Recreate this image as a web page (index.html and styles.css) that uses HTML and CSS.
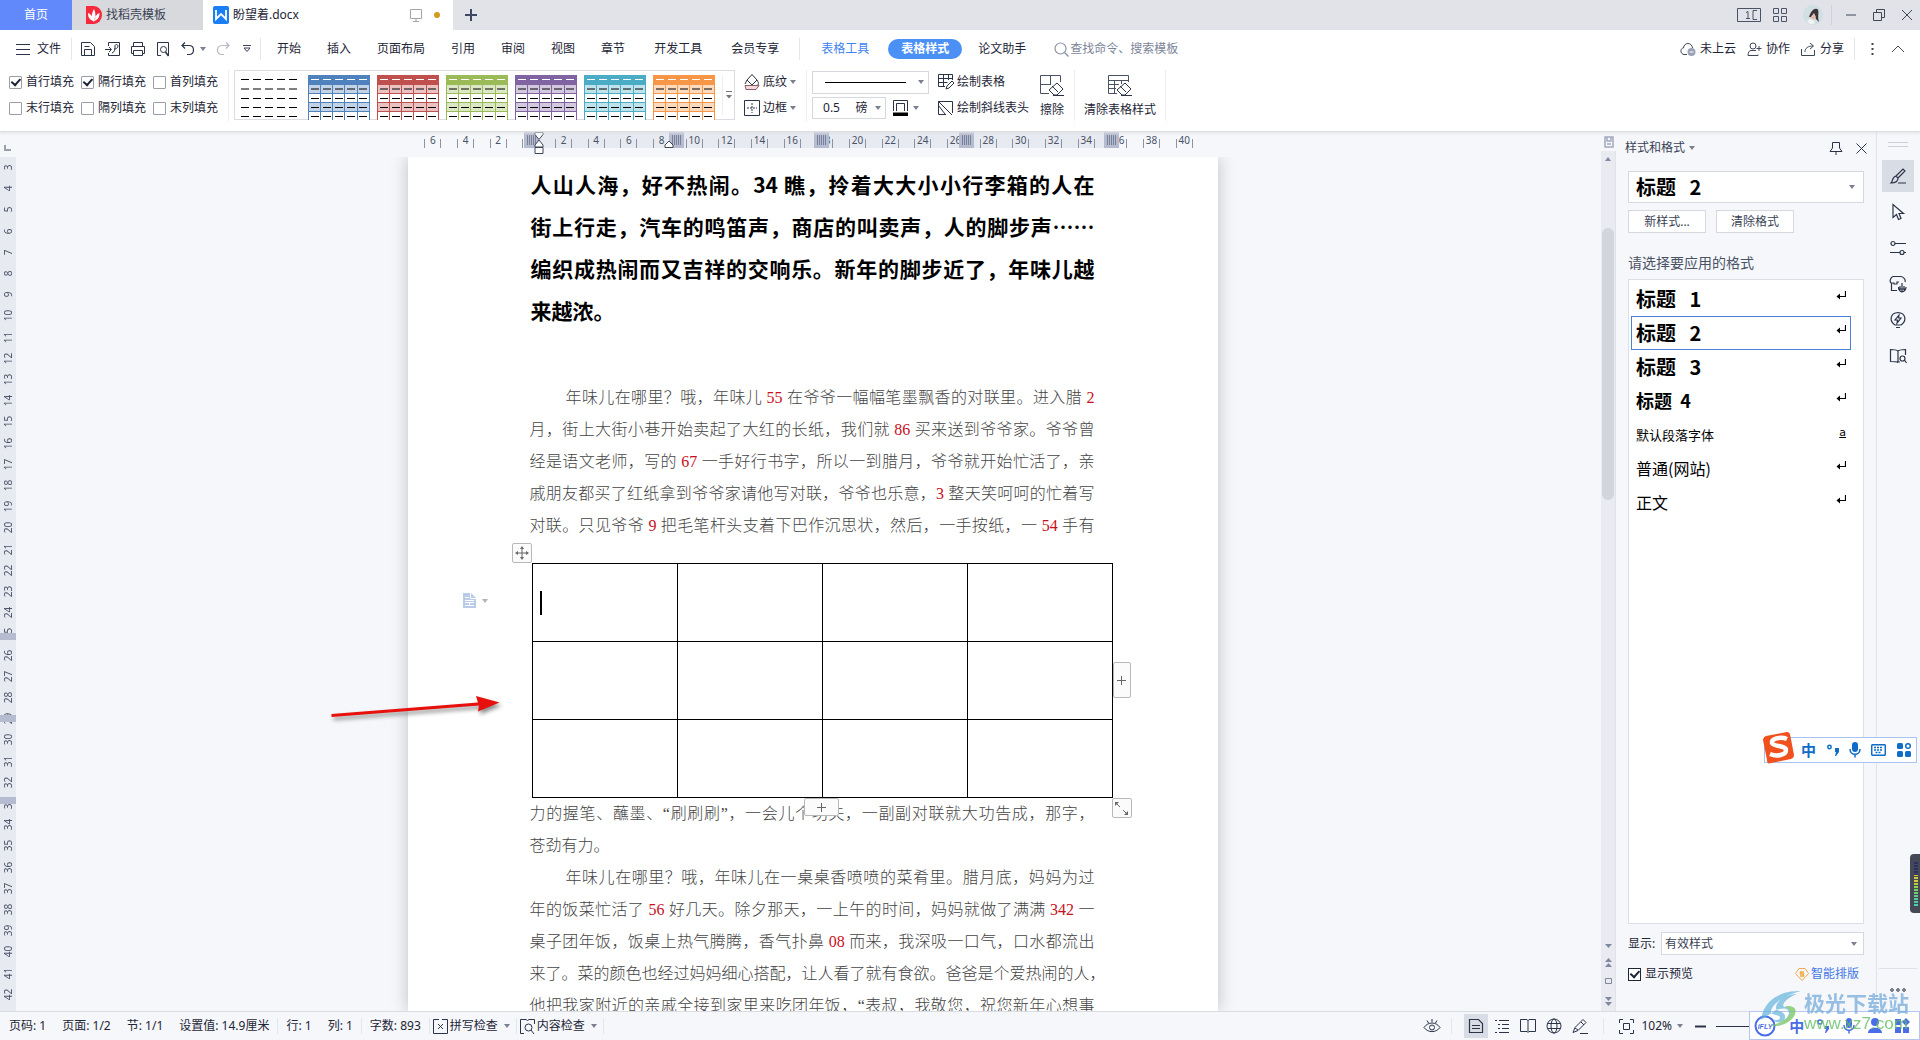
FILE: index.html
```html
<!DOCTYPE html>
<html lang="zh-CN">
<head>
<meta charset="utf-8">
<meta name="viewport" content="width=device-width, initial-scale=1">
<title>盼望着.docx</title>
<link rel="stylesheet" href="styles.css">
</head>
<body>
<svg class="defs" aria-hidden="true">
  <symbol id="preset" viewBox="0 0 62 45">
    <rect width="62" height="45" fill="#fff"/>
    <rect width="62" height="9" fill="currentColor"/>
    <path d="M0 9h62v9H0zM0 27h62v9H0z" fill="currentColor" opacity=".35"/>
    <path d="M.5 9v36M12.500 9v36M24.500 9v36M36.500 9v36M49.500 9v36M61.500 9v36M0 9.500h62M0 18.500h62M0 27.500h62M0 36.500h62" stroke="currentColor" fill="none"/>
    <path d="M3 4.500h56" stroke="#fff" stroke-width="1" stroke-dasharray="8 4"/>
    <path d="M3 14h56M3 23.500h56M3 32.500h56M3 41.500h56" stroke="#000" stroke-width="1.200" stroke-dasharray="8 4"/>
  </symbol>
  <symbol id="ret" viewBox="0 0 10 10"><path d="M9.500 1v5.500H2" fill="none" stroke="currentColor" stroke-width="1.200"/><path d="M4 3.500v6L.5 6.500z" fill="currentColor"/></symbol>
</svg>

<header>
  <div class="tabs">
    <button class="tab home">首页</button>
    <button class="tab tpl"><svg width="16" height="18" viewBox="0 0 16 18"><path d="M0 0h8a8 9 0 0 1 0 18H0z" fill="#f5283c"/><path d="M8 16C5 13 5 8 8 3c2 4 2 9 0 13M7 15C3 13 2 11 2 7c3 1 5 4 5 8M8.500 15c4-2 5-4 5-8-3 1-5 4-5 8" fill="#fff"/></svg>找稻壳模板</button>
    <button class="tab doc"><svg width="16" height="18" viewBox="0 0 16 18"><rect width="16" height="18" rx="2" fill="#1a7ef5"/><path d="M3 4v9l5-5 5 5V4" fill="none" stroke="#fff" stroke-width="1.800"/></svg>盼望着.docx<span class="grow"></span><svg width="12" height="13" viewBox="0 0 12 13" fill="none" stroke="#a0a4ad"><path d="M.5.5h11v9H.5zM6 9.500v3M3 12.500h6"/></svg><i class="dot"></i></button>
    <button class="tab plus" aria-label="新建"><svg width="12" height="12" viewBox="0 0 12 12"><path d="M6 0v12M0 6h12" stroke="#3e4860" stroke-width="2"/></svg></button>
    <span class="grow"></span>
    <div class="window">
      <button aria-label="切换"><svg width="24" height="14" viewBox="0 0 24 14" fill="none" stroke="#4a5266"><path d="M.5.5h23v13H.5zM9 4.500l2-1v7M9 10.500h4M20 2.500h-4v9h4"/></svg></button>
      <button aria-label="应用"><svg width="14" height="14" viewBox="0 0 14 14" fill="none" stroke="#4a5266"><path d="M.5.5h5v5h-5zM8.500.5h5v5h-5zM.5 8.500h5v5h-5zM8.500 8.500h5v5h-5z"/></svg></button>
      <button class="user" aria-label="用户"><svg width="20" height="20" viewBox="0 0 20 20"><circle cx="10" cy="10" r="10" fill="#cfdfe2"/><path d="M6 12c2-5 4-9 8-8 3 1 0 7 2 13l-3-3-2-5-3 3z" fill="#3a3338"/><path d="M11 8l2 4-3 3-3-2z" fill="#e5b9b0"/><path d="M4 16c3-3 6-3 8 2-4 2-6 1-8-2" fill="#f2f4f5"/></svg></button>
      <i class="vr"></i>
      <button aria-label="最小化"><svg width="12" height="12" viewBox="0 0 12 12"><path d="M1 6h10" stroke="#3e4658"/></svg></button>
      <button aria-label="还原"><svg width="12" height="12" viewBox="0 0 12 12" fill="none" stroke="#3e4658"><path d="M.5 3.500h8v8h-8zM3.500 3.500v-3h8v8h-3"/></svg></button>
      <button aria-label="关闭"><svg width="12" height="12" viewBox="0 0 12 12"><path d="M1 1l10 10M11 1L1 11" stroke="#3e4658"/></svg></button>
    </div>
  </div>

  <div class="menu">
    <button class="file"><svg width="14" height="12" viewBox="0 0 14 12"><path d="M0 1.500h14M0 6.500h14M0 11.500h14" stroke="#2b3348"/></svg>文件</button>
    <i class="vr"></i>
    <div class="quick">
      <button aria-label="保存"><svg width="16" height="16" viewBox="0 0 16 16" fill="none" stroke="#2b3348"><path d="M1.500 14.500v-13h9l4 4v9zM4.500 14.500v-6h7v6M4.500 5.500h5"/></svg></button>
      <button aria-label="输出"><svg width="16" height="16" viewBox="0 0 16 16" fill="none" stroke="#2b3348"><path d="M3.500 5V1.500h11v13h-11V12M0 8.500h6M4 6l2.500 2.500L4 11M7 12c3-1 3-4 3-7 0-2 3-2 3 0s-2 3-4 3"/></svg></button>
      <button aria-label="打印"><svg width="16" height="16" viewBox="0 0 16 16" fill="none" stroke="#2b3348"><path d="M3.500 5V1.500h9V5M3.500 12.500h-2v-7h13v7h-2M3.500 9.500h9v5h-9z"/></svg></button>
      <button aria-label="预览"><svg width="16" height="16" viewBox="0 0 16 16" fill="none" stroke="#2b3348"><path d="M6 14.500H2.500v-13h11v13"/><circle cx="8.500" cy="8.500" r="3"/><path d="M10.500 11l3 4" stroke-width="1.500"/></svg></button>
      <button class="undo" aria-label="撤销"><svg width="16" height="16" viewBox="0 0 16 16" fill="none" stroke="#2b3348" stroke-width="1.200"><path d="M5 1.500L2 4.500l3 3M2 4.500h7c6 0 6 9 0 9H7"/></svg><i class="tri"></i></button>
      <button aria-label="恢复"><svg width="16" height="16" viewBox="0 0 16 16" fill="none" stroke="#b4b8c2" stroke-width="1.200"><path d="M11 1.500l3 3-3 3M14 4.500H7c-6 0-6 9 0 9h2"/></svg></button>
      <button class="more" aria-label="更多"><svg width="8" height="8" viewBox="0 0 8 8" fill="none" stroke="#3e4658"><path d="M0 .5h8M1 3l3 3.500L7 3z"/></svg></button>
    </div>
    <i class="vr"></i>
    <nav>
      <button>开始</button><button>插入</button><button>页面布局</button><button>引用</button><button>审阅</button><button>视图</button><button>章节</button><button>开发工具</button><button>会员专享</button>
    </nav>
    <i class="vr"></i>
    <button class="link">表格工具</button>
    <button class="pill">表格样式</button>
    <button>论文助手</button>
    <label class="search"><svg width="15" height="15" viewBox="0 0 15 15" fill="none" stroke="#8a93a8" stroke-width="1.200"><circle cx="6.500" cy="6.500" r="5.500"/><path d="M10.500 10.500l4 4"/></svg><input type="text" placeholder="查找命令、搜索模板" aria-label="查找命令"></label>
    <span class="grow"></span>
    <div class="share">
      <button><svg width="16" height="16" viewBox="0 0 16 16" fill="none" stroke="#3e4658"><path d="M7 13.500H4C0 13 0 7 3.500 7 4 1 12 1 12.500 7"/><circle cx="11.500" cy="11" r="4" fill="#9aa2b8" stroke="none"/><path d="M9.500 11h4" stroke="#fff"/></svg>未上云</button>
      <button><svg width="15" height="15" viewBox="0 0 15 15" fill="none" stroke="#3e4658"><circle cx="6" cy="4" r="3"/><path d="M9 8.500H4c-3 0-3 5-3 5h10v-1M9.500 6.500h5M12 4v5"/></svg>协作</button>
      <button><svg width="15" height="15" viewBox="0 0 15 15" fill="none" stroke="#3e4658"><path d="M.5 7v6.500h13V8M4 10c0-4 3-6 8-6M9 1l3.500 3L9 7"/></svg>分享</button>
      <i class="vr"></i>
      <button aria-label="更多"><svg width="3" height="12" viewBox="0 0 3 12"><path d="M1.500 0v2M1.500 5v2M1.500 10v2" stroke="#3e4658" stroke-width="2"/></svg></button>
      <button aria-label="收起"><svg width="14" height="8" viewBox="0 0 14 8"><path d="M1 7l6-6 6 6" fill="none" stroke="#3e4658"/></svg></button>
    </div>
  </div>

  <div class="tools">
    <div class="checks">
      <label><input type="checkbox" checked>首行填充</label><label><input type="checkbox" checked>隔行填充</label><label><input type="checkbox">首列填充</label>
      <label><input type="checkbox">末行填充</label><label><input type="checkbox">隔列填充</label><label><input type="checkbox">末列填充</label>
    </div>
    <i class="vr"></i>
    <div class="gallery">
      <button aria-label="无样式"><svg width="62" height="45" viewBox="0 0 62 45"><path d="M2 4.500h58M2 14h58M2 23.500h58M2 32.500h58M2 41.500h58" stroke="#000" stroke-width="1.200" stroke-dasharray="8 4"/></svg></button>
      <button class="blue" aria-label="蓝色"><svg width="62" height="45"><use href="#preset"/></svg></button>
      <button class="red" aria-label="红色"><svg width="62" height="45"><use href="#preset"/></svg></button>
      <button class="green" aria-label="绿色"><svg width="62" height="45"><use href="#preset"/></svg></button>
      <button class="purple" aria-label="紫色"><svg width="62" height="45"><use href="#preset"/></svg></button>
      <button class="teal" aria-label="青色"><svg width="62" height="45"><use href="#preset"/></svg></button>
      <button class="orange" aria-label="橙色"><svg width="62" height="45"><use href="#preset"/></svg></button>
      <button class="expand" aria-label="展开"><svg width="6" height="8" viewBox="0 0 6 8"><path d="M0 .5h6" stroke="#777"/><path d="M0 4h6L3 7.500z" fill="#777"/></svg></button>
    </div>
    <div class="stack fills">
      <button><svg width="16" height="18" viewBox="0 0 16 18" fill="none" stroke="#2b3348"><path d="M8 1.500l5 5.500-5 5-5-5zM3 7l-2 4M13 7c1 2 2 3 1 5"/><path d="M1 12.500h14l-3 4H2z" fill="#f3d9d9" stroke="#8a6068"/></svg>底纹<i class="tri"></i></button>
      <button><svg width="16" height="16" viewBox="0 0 16 16" fill="none" stroke="#2b3348"><path d="M.5.5h15v15H.5z"/><path d="M8 3v10M3 8h10" stroke-dasharray="2 1"/></svg>边框<i class="tri"></i></button>
    </div>
    <i class="vr"></i>
    <div class="stack lines">
      <button class="combo line-style" aria-label="线型"><i class="rule"></i><i class="tri"></i></button>
      <div class="weight">
        <span class="combo"><select aria-label="线宽"><option>0.5 &nbsp; &nbsp; 磅</option></select><i class="tri"></i></span>
        <button aria-label="边框颜色"><svg width="15" height="17" viewBox="0 0 15 17"><path d="M.5 11V.5h14V11M3.500 11V3.500h8V11" fill="none" stroke="#2b3348"/><path d="M0 12.500h15v3.500H0z"/></svg><i class="tri"></i></button>
      </div>
    </div>
    <div class="stack draw">
      <button><svg width="16" height="16" viewBox="0 0 16 16" fill="none" stroke="#2b3348"><path d="M7 12.500H.5v-12h14V6M.5 4.500h14M.5 8.500h9M5.500.5v12M10.500.5V6M8 15l1-3 5-5 2 2-5 5z"/></svg>绘制表格</button>
      <button><svg width="16" height="16" viewBox="0 0 16 16" fill="none" stroke="#2b3348"><path d="M8 14.500H.5V1.500h14V13M.5 1.500L14 15M.5 5.500L7 14"/></svg>绘制斜线表头</button>
    </div>
    <button class="big"><svg width="24" height="22" viewBox="0 0 24 22" fill="none" stroke="#4a5266"><path d="M9 18.500H.5V.5h20V7M.5 9.500H11M10.500.5V9"/><path d="M17 8l6 6-6 6h-3l-5-5zM12 11l6 6M13 20.500h11" stroke="#2b3348"/></svg>擦除</button>
    <i class="vr"></i>
    <button class="big"><svg width="24" height="22" viewBox="0 0 24 22" fill="none" stroke="#4a5266"><path d="M9 18.500H.5V.5h20V7M.5 5.500h20M.5 9.500H11M.5 13.500H8M6.500 5v13M13.500 5v4"/><path d="M17 8l6 6-6 6h-3l-5-5zM12 11l6 6M13 20.500h11" stroke="#2b3348"/></svg>清除表格样式</button>
    <i class="vr"></i>
  </div>
</header>

<main>
  <section class="editor">
    <div class="hruler">
      <svg class="corner" width="7" height="6" viewBox="0 0 7 6"><path d="M1 0v5h6" fill="none" stroke="#9aa0ae" stroke-width="2"/></svg>
      <div class="hscale">
        <i class="zone"></i>
        <ol><li>6</li><li>4</li><li>2</li><li></li><li>2</li><li>4</li><li>6</li><li>8</li><li>10</li><li>12</li><li>14</li><li>16</li><li>18</li><li>20</li><li>22</li><li>24</li><li>26</li><li>28</li><li>30</li><li>32</li><li>34</li><li>36</li><li>38</li><li>40</li></ol>
        <div class="cols"><i></i><i></i><i></i><i></i><i></i></div>
        <svg class="indent" width="10" height="22" viewBox="0 0 10 22" fill="#fff" stroke="#3e4658"><path d="M1 .5h8v2L5 7.500l-4-5zM5 8l4 5v2H1v-2zM1 15.500h8v6H1z"/></svg>
        <svg class="right-indent" width="10" height="8" viewBox="0 0 10 8" fill="#fff" stroke="#3e4658"><path d="M5 1l4 4v2.500H1V5z"/></svg>
      </div>
    </div>
    <div class="work">
      <div class="vruler">
        <ol><li>3</li><li>4</li><li>5</li><li>6</li><li>7</li><li>8</li><li>9</li><li>10</li><li>11</li><li>12</li><li>13</li><li>14</li><li>15</li><li>16</li><li>17</li><li>18</li><li>19</li><li>20</li><li>21</li><li>22</li><li>23</li><li>24</li><li>25</li><li>26</li><li>27</li><li>28</li><li>29</li><li>30</li><li>31</li><li>32</li><li>33</li><li>34</li><li>35</li><li>36</li><li>37</li><li>38</li><li>39</li><li>40</li><li>41</li><li>42</li></ol>
        <div class="rows"><i></i><i></i><i></i></div>
      </div>
      <div class="canvas">
        <article class="page">
          <h2>
            <span>人山人海，好不热闹。34 瞧，拎着大大小小行李箱的人在</span>
            <span>街上行走，汽车的鸣笛声，商店的叫卖声，人的脚步声……</span>
            <span>编织成热闹而又吉祥的交响乐。新年的脚步近了，年味儿越</span>
            <span class="end">来越浓。</span>
          </h2>
          <p>
            <span class="first">年味儿在哪里？哦，年味儿 <b>55</b> 在爷爷一幅幅笔墨飘香的对联里。进入腊 <b>2</b></span>
            <span>月，街上大街小巷开始卖起了大红的长纸，我们就 <b>86</b> 买来送到爷爷家。爷爷曾</span>
            <span>经是语文老师，写的 <b>67</b> 一手好行书字，所以一到腊月，爷爷就开始忙活了，亲</span>
            <span>戚朋友都买了红纸拿到爷爷家请他写对联，爷爷也乐意，<b>3</b> 整天笑呵呵的忙着写</span>
            <span>对联。只见爷爷 <b>9</b> 把毛笔杆头支着下巴作沉思状，然后，一手按纸，一 <b>54</b> 手有</span>
          </p>
          <div class="grid-wrap">
            <table aria-label="表格">
              <tbody>
                <tr><td><i class="caret"></i></td><td></td><td></td><td></td></tr>
                <tr><td></td><td></td><td></td><td></td></tr>
                <tr><td></td><td></td><td></td><td></td></tr>
              </tbody>
            </table>
            <button class="handle move" aria-label="移动表格"><svg width="14" height="14" viewBox="0 0 14 14"><path d="M7 2v10M2 7h10" stroke="#666"/><path d="M7 0l2 3H5zM7 14l2-3H5zM0 7l3-2v4zM14 7l-3-2v4z" fill="#666"/></svg></button>
            <button class="handle add-col" aria-label="添加列"><svg width="9" height="9" viewBox="0 0 9 9"><path d="M4.500 0v9M0 4.500h9" stroke="#666"/></svg></button>
            <button class="handle add-row" aria-label="添加行"><svg width="9" height="9" viewBox="0 0 9 9"><path d="M4.500 0v9M0 4.500h9" stroke="#666"/></svg></button>
            <button class="handle size" aria-label="调整大小"><svg width="13" height="13" viewBox="0 0 13 13"><path d="M1 1l4 4M8 8l4 4" stroke="#666"/><path d="M0 0h4L0 4zM13 13H9l4-4z" fill="#666"/></svg></button>
            <button class="paste" aria-label="粘贴选项"><svg width="13" height="15" viewBox="0 0 13 15"><path d="M0 0h8l5 5v10H0z" fill="#b9cbe6"/><path d="M7.500 0v5.500H13M2 4.500h4M2 7.500h9M2 9.500h9M2 12.500h9M6.500 9v4" fill="none" stroke="#fff"/></svg><i class="tri"></i></button>
            <svg class="pointer" width="176" height="28" viewBox="0 0 176 28"><path d="M1.500 20L148 8.500 146 2l23.500 6.500L148 17.500l1-6L1.500 23z" fill="#e8100c"/></svg>
          </div>
          <p>
            <span>力的握笔、蘸墨、“刷刷刷”，一会儿个功夫，一副副对联就大功告成，那字，</span>
            <span class="end">苍劲有力。</span>
            <span class="first">年味儿在哪里？哦，年味儿在一桌桌香喷喷的菜肴里。腊月底，妈妈为过</span>
            <span>年的饭菜忙活了 <b>56</b> 好几天。除夕那天，一上午的时间，妈妈就做了满满 <b>342</b> 一</span>
            <span>桌子团年饭，饭桌上热气腾腾，香气扑鼻 <b>08</b> 而来，我深吸一口气，口水都流出</span>
            <span>来了。菜的颜色也经过妈妈细心搭配，让人看了就有食欲。爸爸是个爱热闹的人，</span>
            <span>他把我家附近的亲戚全接到家里来吃团年饭，“表叔，我敬您，祝您新年心想事</span>
          </p>
        </article>
      </div>
    </div>
  </section>

  <div class="scroll">
    <svg width="10" height="12" viewBox="0 0 10 12" fill="none" stroke="#a3a9bf" stroke-width="1.500"><path d="M1 1h8v10H1zM3 1v4h4V1M3 8h4"/></svg>
    <div class="track">
      <i class="up"></i>
      <i class="thumb"></i>
      <span class="grow"></span>
      <svg width="8" height="68" viewBox="0 0 8 68" fill="#8088a0"><path d="M1 1h7L4.500 5zM4.500 15L8 19H1zM4.500 20L8 24H1zM1 54h7l-3.500 4zM1 59h7l-3.500 4z"/><path d="M1.500 35.500h6v5h-6z" fill="none" stroke="#8088a0"/></svg>
    </div>
  </div>

  <aside class="panel">
    <div class="title"><button>样式和格式<i class="tri"></i></button><span class="grow"></span>
      <button aria-label="固定"><svg width="14" height="13" viewBox="0 0 14 13" fill="none" stroke="#2b3348"><path d="M3.500.5h7V6l2.500 3.500H1L3.500 6zM7 9.500V13"/></svg></button>
      <button aria-label="关闭"><svg width="11" height="11" viewBox="0 0 11 11"><path d="M.5.5l10 10M10.500.5l-10 10" stroke="#2b3348"/></svg></button>
    </div>
    <div class="combo current"><select aria-label="当前样式"><option>标题&nbsp;&nbsp; 2</option></select><i class="tri"></i></div>
    <div class="pair"><button>新样式...</button><button>清除格式</button></div>
    <h3>请选择要应用的格式</h3>
    <ul>
      <li class="h1">标题&nbsp;&nbsp; 1<svg width="10" height="10"><use href="#ret"/></svg></li>
      <li class="h2 on">标题&nbsp;&nbsp; 2<svg width="10" height="10"><use href="#ret"/></svg></li>
      <li class="h3">标题&nbsp;&nbsp; 3<svg width="10" height="10"><use href="#ret"/></svg></li>
      <li class="h4">标题&nbsp; 4<svg width="10" height="10"><use href="#ret"/></svg></li>
      <li class="small">默认段落字体<u>a</u></li>
      <li>普通(网站)<svg width="10" height="10"><use href="#ret"/></svg></li>
      <li>正文<svg width="10" height="10"><use href="#ret"/></svg></li>
    </ul>
    <div class="show"><label for="show">显示:</label><span class="combo"><select id="show"><option>有效样式</option></select><i class="tri"></i></span></div>
    <div class="preview"><label><input type="checkbox" checked>显示预览</label>
      <a href="#"><svg width="14" height="13" viewBox="0 0 14 13" fill="none" stroke="#f0a848"><path d="M4 .5h6l3.500 5L7 12.500.5 5.500z"/><path d="M9 4H5.500v2h3v2H5" stroke-width="1.500"/></svg>智能排版</a></div>
  </aside>

  <aside class="strip">
    <i class="grip"></i>
    <button class="on" aria-label="样式"><svg width="18" height="18" viewBox="0 0 18 18" fill="none" stroke="#2b3348" stroke-width="1.200"><path d="M7 9l7-7 2 2-7 7M7 9l2 2c0 4-3 5-7 5 2-2 1-6 5-7M9 16h8"/></svg></button>
    <button aria-label="选择"><svg width="18" height="18" viewBox="0 0 18 18" fill="none" stroke="#2b3348" stroke-width="1.200"><path d="M4 1.500v13l3.500-3 2 5 2.500-1-2-5h4.500z"/></svg></button>
    <button aria-label="属性"><svg width="18" height="18" viewBox="0 0 18 18" fill="none" stroke="#2b3348" stroke-width="1.200"><circle cx="4" cy="4.500" r="2"/><circle cx="13" cy="13.500" r="2"/><path d="M6 4.500h11M1 13.500h10M15 13.500h2"/></svg></button>
    <button aria-label="图库"><svg width="18" height="18" viewBox="0 0 18 18" fill="none" stroke="#2b3348" stroke-width="1.200"><path d="M8 15.500H2.500V8M2 8C0 6 2 2 4 1.500h8C14 2 17 4 16 7M2 8h3v1h3V7h2"/><path d="M13 17V8M9.500 12c0 3 1 4 3.500 5 3-1 4-2 4-5M11 11v4M15 11v4M9 14h8"/></svg></button>
    <button aria-label="推荐"><svg width="18" height="18" viewBox="0 0 18 18" fill="none" stroke="#2b3348" stroke-width="1.200"><path d="M6 14C0 10 1 2 9 1.500 17 2 18 10 12 14zM7 16.500h4M10 4L6 9h2.500L8 12l4-5H9.500z"/></svg></button>
    <button aria-label="查阅"><svg width="18" height="18" viewBox="0 0 18 18" fill="none" stroke="#2b3348" stroke-width="1.200"><path d="M9 15V4C7 2.500 4 2.500 1.500 2.500v12c3 0 6 0 7.500 1M9 4c2-1.500 4-1.500 7.500-1.500V8M9 15h2"/><circle cx="13.500" cy="11.500" r="2.500"/><path d="M15.500 13l2 3"/></svg></button>
    <span class="grow"></span>
    <button class="dots" aria-label="更多"><svg width="16" height="4" viewBox="0 0 16 4" fill="none" stroke="#2b3348"><circle cx="2" cy="2" r="1.300"/><circle cx="8" cy="2" r="1.300"/><circle cx="14" cy="2" r="1.300"/></svg></button>
  </aside>
</main>

<footer>
  <span>页码: 1</span><span>页面: 1/2</span><span>节: 1/1</span><span>设置值: 14.9厘米</span><i class="vr"></i><span>行: 1</span><span>列: 1</span><i class="vr"></i><span>字数: 893</span><i class="vr"></i>
  <button><svg width="15" height="15" viewBox="0 0 15 15" fill="none" stroke="#2b3348"><path d="M5 .5H.5v14H5M10 .5h4.500v14H10M5 5l5 5M10 5l-5 5M5 .5h1M9 .5h1M5 14.500h5"/></svg>拼写检查<i class="tri"></i></button><i class="vr"></i>
  <button><svg width="15" height="15" viewBox="0 0 15 15" fill="none" stroke="#2b3348"><path d="M4 14.500H.5V.5H6l1.500 1L9 .5h5.500V5"/><circle cx="8.500" cy="8.500" r="3.500"/><path d="M11 11l3 4"/></svg>内容检查<i class="tri"></i></button><i class="vr"></i>
  <span class="grow"></span>
  <div class="views">
    <button class="eye" aria-label="护眼"><svg width="18" height="16" viewBox="0 0 18 16" fill="none" stroke="#2b3348"><path d="M1 9.500C5 3.500 13 3.500 17 9.500 13 15 5 15 1 9.500M9 1v3M4 2.500l1.500 2.500M14 2.500L12.500 5"/><circle cx="9" cy="9.500" r="2.500"/></svg></button>
    <i class="vr"></i>
    <button class="on" aria-label="页面视图"><svg width="16" height="16" viewBox="0 0 16 16" fill="none" stroke="#2b3348" stroke-width="1.200"><path d="M1.500 1.500h9l4 4v9h-13zM4 7.500h8M4 10.500h8"/></svg></button>
    <button aria-label="大纲"><svg width="16" height="16" viewBox="0 0 16 16" stroke="#2b3348"><path d="M1 2.500h2M5 2.500h10M4 6.500h2M8 6.500h7M4 10.500h2M8 10.500h7M1 14.500h2M5 14.500h10"/></svg></button>
    <button aria-label="阅读"><svg width="16" height="16" viewBox="0 0 16 16" fill="none" stroke="#2b3348"><path d="M.5 1.500H7l1 1 1-1h6.500v12H9l-1 1-1-1H.5zM8 2v12"/></svg></button>
    <button aria-label="网页"><svg width="16" height="16" viewBox="0 0 16 16" fill="none" stroke="#2b3348"><circle cx="8" cy="8" r="7"/><ellipse cx="8" cy="8" rx="3" ry="7"/><path d="M1.500 5.500h13M1.500 10.500h13"/></svg></button>
    <button aria-label="写作"><svg width="16" height="16" viewBox="0 0 16 16" fill="none" stroke="#2b3348"><path d="M1 14.500l2-5 8-8 3 3-8 8zM9 4l3 3M3 10l3 2M8 15.500h8"/></svg></button>
    <i class="vr"></i>
    <button aria-label="适应"><svg width="15" height="15" viewBox="0 0 15 15" fill="none" stroke="#2b3348"><path d="M.5 4V.5H4M11 .5h3.500V4M14.500 11v3.500H11M4 14.500H.5V11M4.500 4.500h6v6h-6z"/></svg></button>
    <button class="zoom">102%<i class="tri"></i></button>
    <button aria-label="缩小"><svg width="11" height="3" viewBox="0 0 11 3"><path d="M0 1.500h11" stroke="#2b3348" stroke-width="2"/></svg></button>
    <i class="slider"></i>
  </div>
</footer>

<div class="ime">
  <svg class="sogou" width="32" height="32" viewBox="0 0 32 32"><path d="M4 4l21-4c2 0 2 1 3 2l4 21c0 2-1 3-3 4L9 31c-3 1-4 0-4-3L1 8c0-2 1-3 3-4z" fill="#f0511e"/><path d="M25 7c-7-3-16 0-15 4s14 2 14 7-9 7-16 4" fill="none" stroke="#fff" stroke-width="4.500"/></svg>
  <b>中</b>
  <svg width="12" height="12" viewBox="0 0 12 12"><circle cx="2.500" cy="3" r="1.700" fill="none" stroke="#0f6cc8" stroke-width="1.500"/><path d="M8 4h4v4l-3 4H8l1-4H8z" fill="#0f6cc8"/></svg>
  <svg width="12" height="16" viewBox="0 0 12 16"><rect x="3" width="6" height="10" rx="3" fill="#0f6cc8"/><path d="M1 7c0 7 10 7 10 0M6 12v3.500" fill="none" stroke="#0f6cc8" stroke-width="1.500"/></svg>
  <svg width="15" height="12" viewBox="0 0 15 12"><rect x=".7" y=".7" width="13.600" height="10.600" rx="1" fill="none" stroke="#0f6cc8" stroke-width="1.500"/><path d="M3 3.500h9M3 6h9M4.500 8.500h6" stroke="#0f6cc8" stroke-width="1.500" stroke-dasharray="2 1"/></svg>
  <svg width="14" height="14" viewBox="0 0 14 14" fill="#0f6cc8"><rect width="6" height="6" rx="1.500"/><rect y="8" width="6" height="6" rx="1.500"/><rect x="8" y="8" width="6" height="6" rx="1.500"/><circle cx="11" cy="3" r="2.300" fill="none" stroke="#0f6cc8" stroke-width="1.500"/></svg>
</div>
<div class="meter"><i></i></div>

<div class="ifly">
  <svg width="22" height="22" viewBox="0 0 22 22"><circle cx="11" cy="11" r="9.500" fill="#fff" stroke="#4a6ce8" stroke-width="2"/><text x="11" y="14" text-anchor="middle">iFLY</text></svg>
  <b>中</b>
  <svg width="12" height="14" viewBox="0 0 12 14"><circle cx="3" cy="3" r="2" fill="none" stroke="#4a6ce8" stroke-width="1.500"/><path d="M8 7h4v3l-3 4H8l1-4H8z" fill="#4a6ce8"/></svg>
  <svg width="12" height="16" viewBox="0 0 12 16"><rect x="3" width="6" height="10" rx="3" fill="#4a6ce8"/><path d="M1 7c0 7 10 7 10 0M6 12v3.500" fill="none" stroke="#4a6ce8" stroke-width="1.500"/></svg>
  <svg width="14" height="15" viewBox="0 0 14 15" fill="#4a6ce8"><circle cx="7" cy="4" r="4"/><path d="M0 15c0-7 14-7 14 0z"/></svg>
  <svg width="15" height="15" viewBox="0 0 15 15" fill="#4a6ce8"><path d="M0 1h6v6H0zM0 9h6v6H0zM8 9h6v6H8zM11 0l4 4-4 4-4-4z"/></svg>
</div>
<div class="mark">
  <svg width="44" height="38" viewBox="0 0 44 38"><path d="M2 30C4 12 20 0 42 1 26 5 12 14 12 22c0 4 10 2 9 6-1 3-6 2-7 1 1 5 13 4 12-3-1-6-10-4-9-9C18 10 28 4 38 4 28 8 22 14 25 17c10-2 13 3 10 8-3 6-10 11-21 11 14-5 18-12 15-16-3-3-9-1-12 0" fill="#5fb0d8" opacity=".85"/><path d="M27 16c11-1 12 6 6 13-5 5-14 8-22 7 13-4 21-10 20-14-1-3-4-4-4-6z" fill="#7cc860" opacity=".9"/></svg>
  <div><strong>极光下载站</strong><em>www.xz7.com</em></div>
</div>
</body>
</html>
```
FILE: styles.css
```css
* { box-sizing: border-box; }
html, body { height: 100%; }
body {
  margin: 0;
  display: flex;
  flex-direction: column;
  overflow: hidden;
  background: #f5f7fa;
  color: #1d2536;
  font: 12px/20px "Noto Sans", "Noto Sans CJK SC", sans-serif;
}
.defs { position: absolute; width: 0; height: 0; }
button {
  display: flex;
  align-items: center;
  padding: 0;
  border: 0;
  background: none;
  color: inherit;
  font: inherit;
  white-space: nowrap;
}
select, input[type="text"] { font: inherit; color: inherit; border: 0; background: none; padding: 0; appearance: none; min-width: 0; }
svg { flex: none; display: block; }
ol, ul { list-style: none; margin: 0; padding: 0; }
.grow { flex: 1; }
.vr { flex: none; width: 1px; align-self: stretch; background: #e4e6ea; }
.tri { flex: none; width: 0; height: 0; border: 3px solid transparent; border-top: 4px solid #7b8090; border-bottom: 0; }

/* title tabs */
.tabs { display: flex; height: 30px; background: #e1e3e8; }
.tab.home { width: 72px; justify-content: center; background: #6289fb; color: #fff; }
.tab.tpl { width: 131px; padding-left: 14px; gap: 4px; background: #d8d9dc; color: #3a4254; }
.tab.doc { width: 250px; padding: 0 13px 0 10px; gap: 4px; background: #fff; }
.tab.doc .dot { width: 6px; height: 6px; margin-left: 8px; border-radius: 3px; background: #d29a1e; }
.tab.plus { padding-left: 12px; }
.window { display: flex; align-items: center; gap: 12px; padding-right: 7px; }
.window .user { margin: 0 -4px 0 4px; }
.window .vr { height: 20px; align-self: center; background: #cfd2d9; margin-right: 1px; }
.window .vr ~ button + button { margin-left: 4px; }

/* menu row */
header { background: #fff; border-bottom: 1px solid #dcdfe4; box-shadow: 0 1px 3px #dfe1e5; z-index: 1; }
.menu { display: flex; align-items: center; height: 38px; }
.menu .vr { height: 22px; align-self: center; }
.file { gap: 7px; padding: 0 10px 0 16px; }
.quick { display: flex; gap: 9px; padding: 0 8px; }
.quick .undo { gap: 4px; }
.quick .more { padding: 0 1px 0 3px; }
nav { display: flex; gap: 26px; padding: 0 20px 0 16px; }
nav button:nth-child(n+8) { margin-left: 3px; }
.menu .link { margin-left: 21px; color: #3f83f0; }
.pill { height: 20px; margin: 0 16px 0 19px; padding: 0 13px; border-radius: 10px; background: #4a90f5; color: #fff; font-weight: 700; }
.search { display: flex; align-items: center; gap: 1px; margin-left: 28px; color: #7b8499; }
.search input { width: 120px; }
.search input::placeholder { color: #7b8499; opacity: 1; }
.share { display: flex; align-items: center; gap: 11px; padding-right: 15px; }
.share button { gap: 4px; }
.share .vr { margin: 0 5px 0 -1px; }
.share button:last-child { margin-left: 6px; }

/* table style tools */
.tools { display: flex; padding: 2px 0 10px; height: 63px; }
.tools > .vr { background: #eceef1; }
.checks { display: grid; grid-template: 24px 24px / repeat(3, 72px); row-gap: 2px; padding: 0 3px 0 9px; }
.checks label, .preview label { display: flex; align-items: center; gap: 4px; white-space: nowrap; }
input[type="checkbox"] { appearance: none; flex: none; width: 13px; height: 13px; margin: 0; border: 1px solid #9a9ea8; border-radius: 1px; background: #fff; display: grid; place-items: center; }
input[type="checkbox"]:checked::after { content: ""; width: 4px; height: 7px; border: solid #1d2536; border-width: 0 2px 2px 0; transform: rotate(42deg) translate(-1px, -1px); }
.gallery { display: flex; gap: 7px; height: 50px; margin-left: 5px; padding: 4px 0 0 4px; border: 1px solid #d9dce1; align-items: flex-start; }
.gallery .blue { color: #4f81bd; }
.gallery .red { color: #c0504d; }
.gallery .green { color: #9bbb59; }
.gallery .purple { color: #8064a2; }
.gallery .teal { color: #4bacc6; }
.gallery .orange { color: #f79646; }
.gallery .expand { width: 12px; height: 40px; justify-content: center; border-left: 1px solid #eceef1; }
.stack { display: grid; grid-template-rows: 24px 24px; row-gap: 2px; justify-items: start; align-items: center; }
.stack button { gap: 4px; }
.fills { padding: 0 10px 0 9px; }
.fills button { gap: 3px; }
.lines { padding-left: 5px; }
.combo { display: flex; align-items: center; border: 1px solid #d5d8de; background: #fff; padding-right: 4px; }
.combo select { flex: 1; }
.line-style { width: 117px; height: 23px; justify-content: space-between; padding-left: 12px; }
.line-style .rule { width: 81px; height: 1px; background: #000; }
.weight { display: flex; gap: 7px; }
.weight .combo { width: 74px; height: 22px; padding-left: 10px; }
.weight button { gap: 5px; }
.draw { padding: 0 11px 0 9px; }
.draw button { gap: 3px; }
.big { flex-direction: column; gap: 3px; align-self: flex-start; padding: 5px 10px 0 0; }
.vr + .big { padding: 5px 9px 0; }

/* editor */
main { flex: 1; display: flex; min-height: 0; }
.editor { flex: 1; display: flex; flex-direction: column; min-width: 0; }
.hruler { display: flex; height: 25px; justify-content: center; position: relative; padding-left: 24px; font: 10px/16px "Noto Sans", sans-serif; color: #4a5266; }
.corner { position: absolute; left: 4px; top: 13px; }
.hscale { position: relative; width: 810px; padding: 0 17px 0 9px; }
.hscale .zone { position: absolute; left: 132px; top: 0; width: 572px; height: 16px; background: #e7eaf1; }
.hscale ol { position: relative; display: grid; grid-template-columns: repeat(24, 1fr); height: 16px; text-align: center; }
.hscale li { background: linear-gradient(#8b93a5, #8b93a5) 25% 7px / 1px 9px no-repeat, linear-gradient(#8b93a5, #8b93a5) 75% 7px / 1px 9px no-repeat; }
.cols { position: absolute; left: 116px; top: 0; display: flex; gap: 130px; }
.cols i { width: 15px; height: 16px; border: 3px solid #b6bccf; background: repeating-linear-gradient(90deg, #79809a 0 1px, transparent 1px 2px), #b6bccf; }
.indent { position: absolute; left: 126px; top: 0; }
.right-indent { position: absolute; left: 256px; top: 8px; }
.work { flex: 1; display: flex; min-height: 0; overflow: hidden; }
.vruler { position: relative; flex: none; width: 16px; background: #e7eaf1; font: 10px/16px "Noto Sans", sans-serif; color: #4a5266; }
.vruler ol { display: grid; grid-template-rows: repeat(40, 1fr); height: 848px; }
.vruler li { writing-mode: vertical-rl; transform: rotate(180deg); text-align: center; min-height: 0; }
.rows { position: absolute; left: 0; top: 476px; display: grid; gap: 75px; }
.rows i { width: 16px; height: 7px; background: #b6bccf; }
.canvas { flex: 1; display: flex; justify-content: center; padding-left: 8px; min-width: 0; }
.page { flex: none; width: 810px; min-height: 100%; padding: 6px 123px 0 122px; background: #fff; box-shadow: 0 0 16px #bdbfc3; }
.page span { display: block; text-align-last: justify; white-space: nowrap; }
.page .end { text-align-last: left; }
.page h2 { margin: 0 0 51px; padding-left: 1px; font: 700 21px/42px "Noto Sans CJK SC", sans-serif; color: #000; }
.page p { margin: 0; font: 300 16px/32px "Liberation Serif", "Noto Sans CJK SC", serif; color: #444; }
.page p .first { padding-left: 36px; }
.page b { font-weight: 400; color: #c8101c; }
.grid-wrap { position: relative; width: 581px; margin: 21px 0 0 2px; }
.page table { width: 100%; table-layout: fixed; border-collapse: collapse; }
.page td { height: 78px; padding: 0 7px; border: 1px solid #000; }
.caret { display: block; width: 2px; height: 24px; background: #000; }
.handle { position: absolute; justify-content: center; width: 20px; height: 20px; border: 1px solid #b8b8b8; border-radius: 2px; background: #fbfbfb; }
.move { left: -20px; top: -20px; }
.add-col { left: 581px; top: 99px; width: 18px; height: 36px; }
.add-row { left: 272px; bottom: -18px; width: 35px; height: 18px; }
.size { left: 580px; bottom: -20px; }
.paste { position: absolute; left: -69px; top: 30px; gap: 6px; }
.paste .tri { border-top-color: #b0b3bb; }
.pointer { position: absolute; left: -202px; top: 131px; filter: drop-shadow(2px 3px 2px #888); }

/* scrollbar */
.scroll { flex: none; width: 15px; display: flex; flex-direction: column; align-items: center; gap: 3px; padding-top: 4px; }
.track { flex: 1; width: 15px; display: flex; flex-direction: column; align-items: center; background: #e9ebf1; border-right: 1px solid #dfe2e8; }
.track .up { margin-top: 6px; border: 3px solid transparent; border-bottom: 4px solid #8088a0; border-top: 0; }
.thumb { width: 12px; height: 272px; margin-top: 67px; border-radius: 6px; background: #d2d5da; }

/* style panel */
.panel { flex: none; width: 261px; display: flex; flex-direction: column; padding: 0 12px; border-right: 1px solid #dfe2e8; }
.title { display: flex; align-items: center; height: 32px; margin-left: -3px; gap: 13px; color: #3a4254; }
.title button:first-child { gap: 4px; }
.title button:last-child { margin-right: -3px; }
.current { height: 32px; margin-top: 7px; padding: 0 8px 0 7px; font: 700 20px/28px "Noto Sans CJK SC", sans-serif; color: #000; }
.pair { display: flex; gap: 10px; margin-top: 7px; }
.pair button { width: 78px; height: 23px; justify-content: center; border: 1px solid #d5d8de; background: #fff; color: #3a4254; }
.panel h3 { margin: 20px 0 6px; font-size: 14px; font-weight: 400; line-height: 20px; color: #4a5266; }
.panel ul { flex: 1; padding: 2px 12px 0 2px; border: 1px solid #dcdfe5; background: #fff; color: #000; font: 16px/32px "Noto Sans CJK SC", sans-serif; }
.panel li { display: flex; justify-content: space-between; height: 34px; padding: 0 4px; border: 1px solid transparent; line-height: 31px; }
.panel li svg, .panel li u { margin-top: 7px; }
.panel li u { font: 11px/14px "DejaVu Sans", sans-serif; }
.panel li.on { border-color: #4a80d8; }
.panel .h1, .panel .h2, .panel .h3 { font-size: 20px; font-weight: 700; }
.panel .h4 { font-size: 18px; font-weight: 700; }
.panel .small { font-size: 13px; }
.show { display: flex; align-items: center; justify-content: space-between; margin-top: 8px; }
.show .combo { width: 203px; height: 23px; padding: 0 6px 0 3px; color: #3a4254; }
.preview { display: flex; justify-content: space-between; height: 20px; margin: 9px 5px 27px 0; }
.preview input { border-color: #1d2536; border-radius: 0; }
.preview a { display: flex; align-items: center; gap: 2px; color: #3f76e8; text-decoration: none; }
.strip { flex: none; width: 43px; display: flex; flex-direction: column; align-items: center; gap: 4px; padding-right: 2px; }
.grip { width: 20px; height: 5px; margin: 10px 0 9px; border: solid #cdd0d6; border-width: 1px 0; }
.strip button { width: 32px; height: 32px; justify-content: center; }
.strip .on, .views .on { background: #d8dde5; }
.strip .dots { border-top: 1px solid #dfe2e8; width: 38px; height: 43px; }

/* status bar */
footer { display: flex; align-items: center; gap: 10px; height: 29px; padding-left: 9px; border-top: 1px solid #d9dce1; white-space: nowrap; }
footer .vr { height: 16px; align-self: center; }
footer > span + span:not(.grow) { margin-left: 6px; }
footer > .vr { margin: 0 -2px; }
footer > button { gap: 2px; }
footer > button .tri { margin-left: 4px; }
footer > .vr + button { margin: 0 -2px 0 -5px; }
.views { display: flex; align-items: center; gap: 10px; padding-right: 171px; }
.views .on { width: 24px; height: 24px; justify-content: center; margin-right: -4px; }
.views .vr { margin: 0 5px; }
.views .eye { margin-right: -2px; }
.views .eye + .vr { margin: 0 2px; }
.zoom { gap: 5px; margin: 0 2px 0 -3px; }
.slider { width: 33px; height: 1px; background: #2b3348; }

/* floating widgets */
.ime { position: fixed; right: 3px; bottom: 277px; width: 153px; height: 26px; display: flex; align-items: center; justify-content: space-between; padding: 0 5px 0 36px; border: 1px solid #a9c4ee; background: #fff; color: #0f6cc8; z-index: 3; }
.ime b, .ifly b { font-size: 15px; }
.sogou { position: absolute; left: -3px; top: -6px; }
.meter { position: fixed; right: 0; bottom: 127px; width: 10px; height: 59px; padding: 7px 2px 6px 4px; border-radius: 4px 0 0 4px; background: #454955; z-index: 3; }
.meter i { display: block; height: 100%; background: repeating-linear-gradient(#454955 0 1px, transparent 1px 3px), linear-gradient(#2a2f66 30%, #d8c93a 31% 45%, #6fd06a 65%, #45c8c0); }
.ifly { position: fixed; right: 0; bottom: 0; width: 171px; height: 29px; display: flex; align-items: center; justify-content: space-between; padding: 0 9px 0 4px; border: 1px solid #b5c6f0; background: #fff; color: #4a6ce8; z-index: 3; }
.ifly text { font: italic 700 7px "Liberation Sans", sans-serif; fill: #4a6ce8; }
.mark { position: fixed; right: 11px; bottom: 6px; display: flex; gap: 1px; z-index: 4; opacity: .8; pointer-events: none; }
.mark div { display: flex; flex-direction: column; }
.mark strong { font: 700 21px/24px "Noto Sans CJK SC", sans-serif; color: #7fb0de; }
.mark em { font: 17px/20px "Liberation Sans", sans-serif; color: #63bd62; }
```
